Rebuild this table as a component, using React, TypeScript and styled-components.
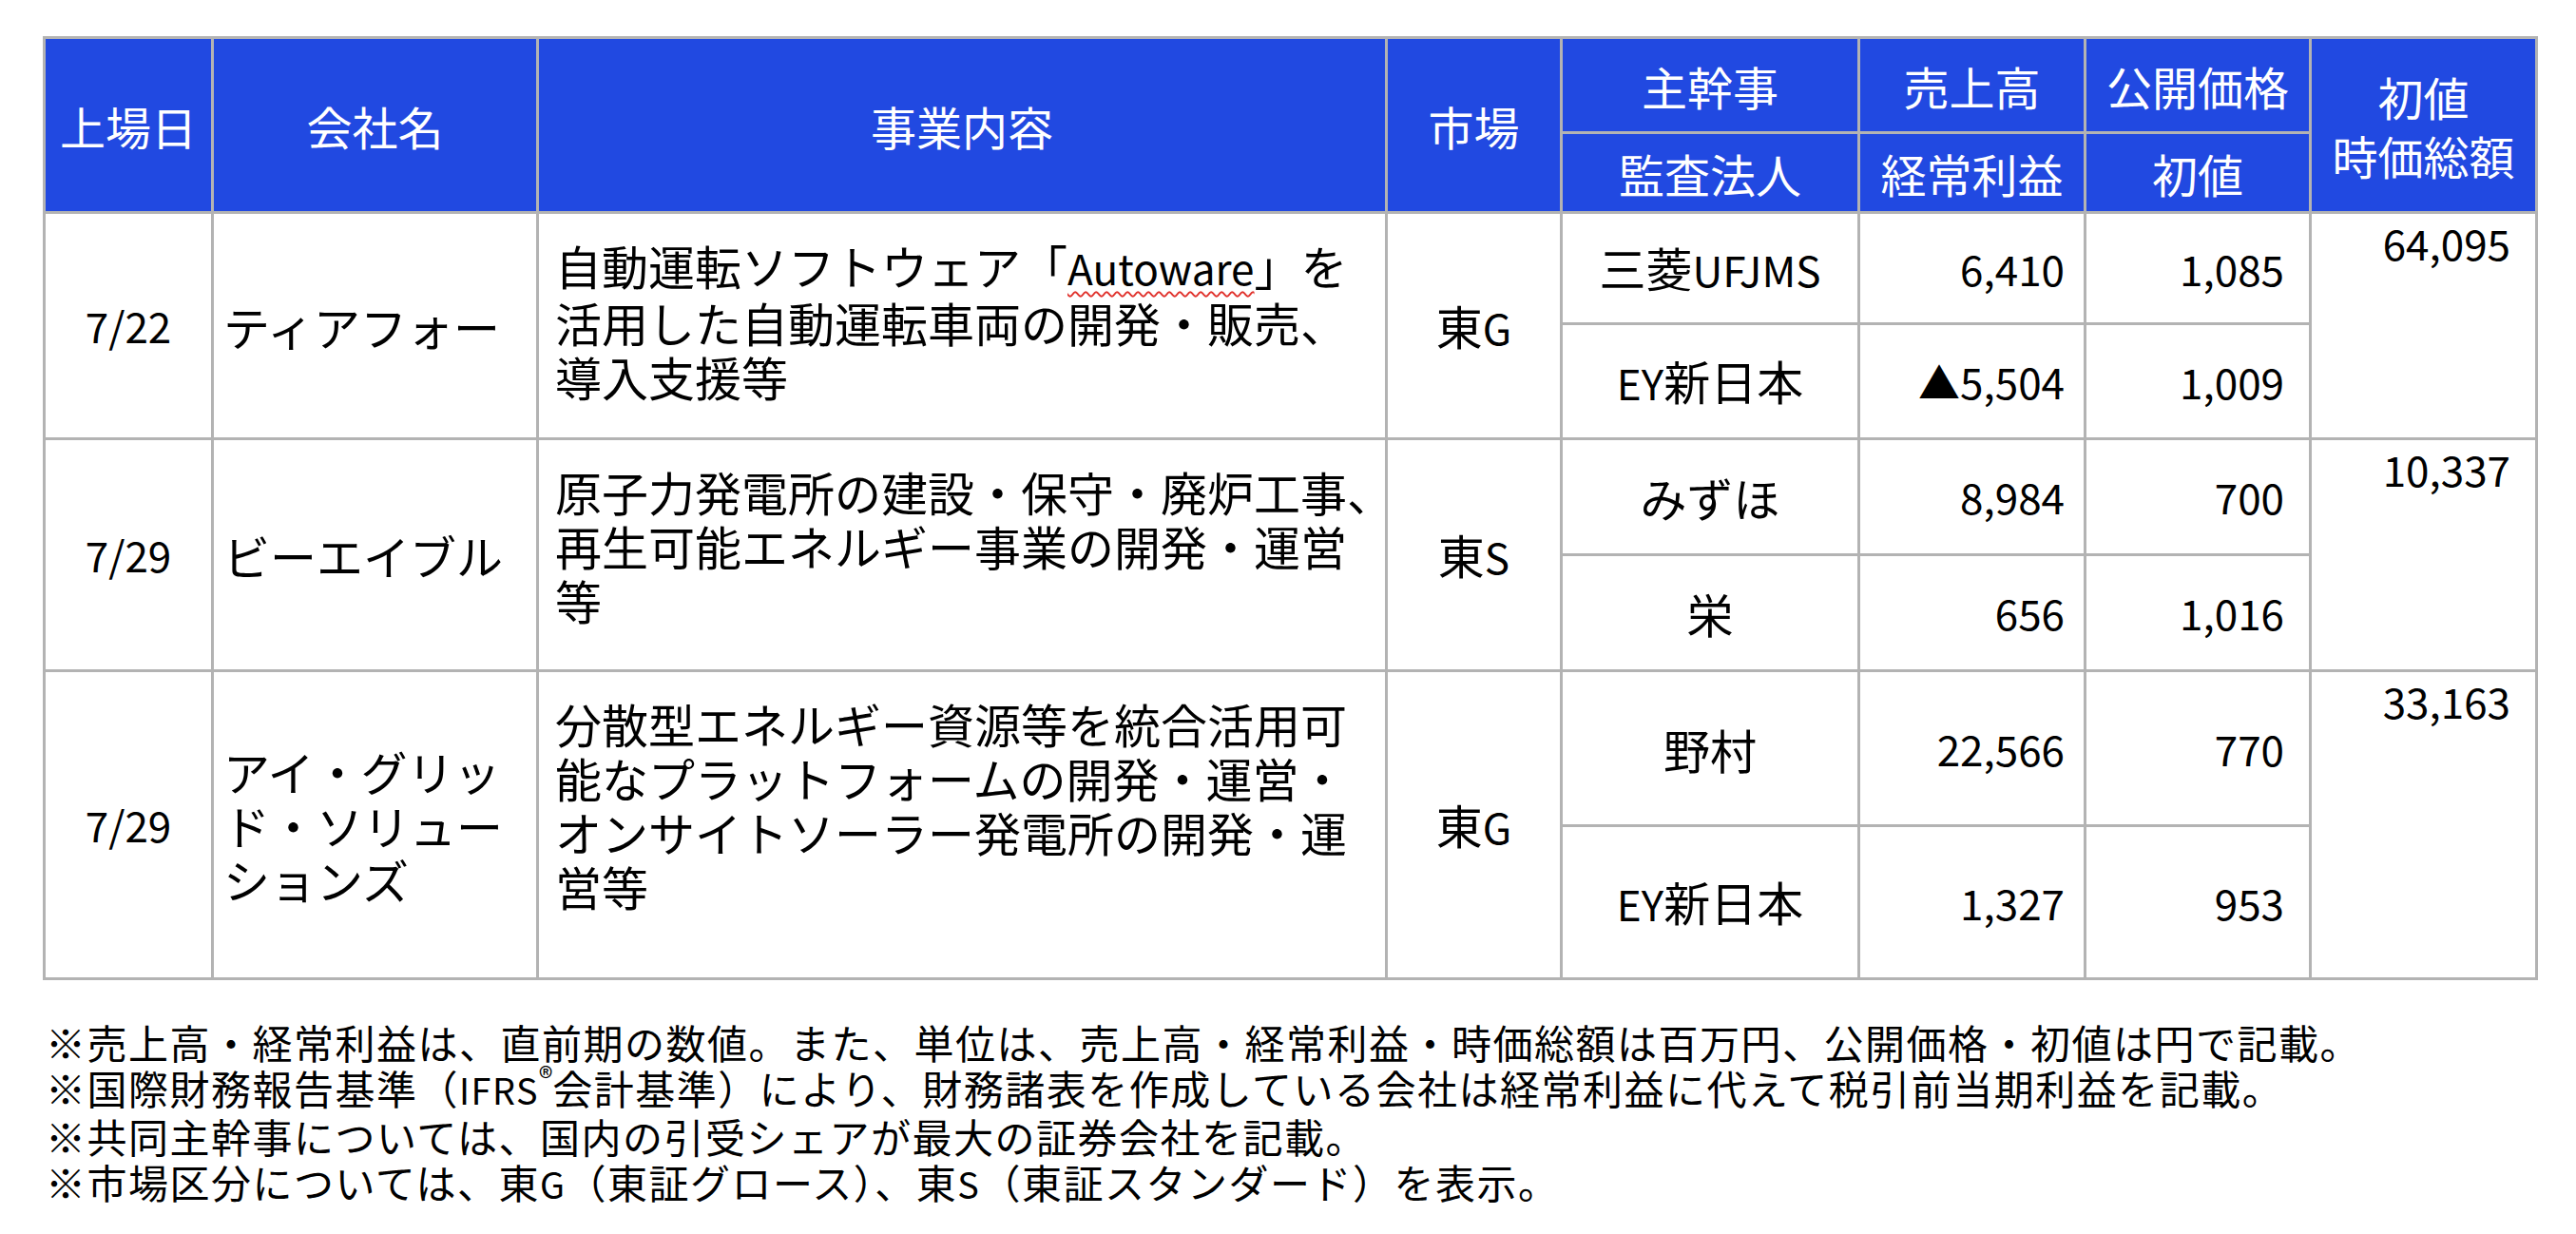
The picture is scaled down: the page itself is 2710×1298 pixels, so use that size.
import React, { ReactNode } from "react"
import styled, { createGlobalStyle } from "styled-components"

const GlobalStyle = createGlobalStyle`
    html, body {
        margin: 0;
        padding: 0;
        background: #ffffff;
    }
    body {
        font-family: "Noto Sans CJK JP", "Noto Sans", sans-serif;
        color: #000000;
    }
`

const Page = styled.div`
    width: 2710px;
    height: 1298px;
    box-sizing: border-box;
    padding: 38px 0 0 45px;
`

const Table = styled.div`
    display: grid;
    grid-template-columns: 174px 339px 890px 181px 310px 235px 234px 235px;
    grid-template-rows: 97px 81px 114px 118px 119px 119px 160px 158px;
    gap: 3px;
    padding: 3px;
    width: fit-content;
    background: #b3b3b3;
`

type Place = { $col: number; $row: number; $span?: number }

const Cell = styled.div<Place>`
    grid-column: ${(p) => p.$col};
    grid-row: ${(p) => `${p.$row} / span ${p.$span ?? 1}`};
    display: flex;
    flex-direction: column;
    justify-content: center;
    background: #ffffff;
    font-size: 49px;
    line-height: 57px;
    white-space: nowrap;
`

const HeadCell = styled(Cell)`
    background: #2149e1;
    color: #ffffff;
    align-items: center;
    text-align: center;
    font-size: 48px;
    line-height: 62px;
`

const CenterCell = styled(Cell)`
    align-items: center;
    text-align: center;
`

const DateCell = styled(CenterCell)`
    font-size: 44px;
`

const NameCell = styled(Cell)`
    padding-left: 10px;
`

const BizCell = styled(Cell)`
    justify-content: flex-start;
    padding: 25px 0 0 17px;
`

const NumCell = styled(Cell)<{ $pad: number }>`
    align-items: flex-end;
    padding-right: ${(p) => p.$pad}px;
    font-size: 44px;
`

const CapCell = styled(Cell)`
    justify-content: flex-start;
    align-items: flex-end;
    padding: 4px 26px 0 0;
    font-size: 44px;
    line-height: 1.2;
`

const Lat = styled.span`
    font-size: 0.9em;
`

const Spell = styled(Lat)`
    text-decoration: underline wavy #e0302a;
    text-decoration-thickness: 1.5px;
    text-underline-offset: 6px;
`

const Notes = styled.div`
    margin-top: 41px;
    padding-left: 3px;
    font-size: 42px;
    line-height: 48.4px;
    letter-spacing: 1.5px;
    white-space: nowrap;
`

const Note = styled.div``

const Sup = styled.sup`
    font-size: 0.72em;
    line-height: 0;
    vertical-align: 0.55em;
    letter-spacing: 0;
`

// latin runs get the smaller latin size, kept on one line
const mix = (s: string): ReactNode => (
    <span>
        {s.split(/([A-Za-z]+)/).map((part, i) =>
            /^[A-Za-z]+$/.test(part) ? <Lat key={i}>{part}</Lat> : part
        )}
    </span>
)

const lines = (items: ReactNode[]) =>
    items.map((item, i) => <div key={i}>{item}</div>)

type Listing = {
    date: string
    name: string[]
    biz: ReactNode[]
    market: string
    lead: string
    audit: string
    sales: string
    profit: string
    price: string
    first: string
    cap: string
}

const listings: Listing[] = [
    {
        date: "7/22",
        name: ["ティアフォー"],
        biz: [
            <>
                自動運転ソフトウェア「<Spell>Autoware</Spell>」を
            </>,
            "活用した自動運転車両の開発・販売、",
            "導入支援等",
        ],
        market: "東G",
        lead: "三菱UFJMS",
        audit: "EY新日本",
        sales: "6,410",
        profit: "▲5,504",
        price: "1,085",
        first: "1,009",
        cap: "64,095",
    },
    {
        date: "7/29",
        name: ["ビーエイブル"],
        biz: ["原子力発電所の建設・保守・廃炉工事、", "再生可能エネルギー事業の開発・運営", "等"],
        market: "東S",
        lead: "みずほ",
        audit: "栄",
        sales: "8,984",
        profit: "656",
        price: "700",
        first: "1,016",
        cap: "10,337",
    },
    {
        date: "7/29",
        name: ["アイ・グリッ", "ド・ソリュー", "ションズ"],
        biz: [
            "分散型エネルギー資源等を統合活用可",
            "能なプラットフォームの開発・運営・",
            "オンサイトソーラー発電所の開発・運",
            "営等",
        ],
        market: "東G",
        lead: "野村",
        audit: "EY新日本",
        sales: "22,566",
        profit: "1,327",
        price: "770",
        first: "953",
        cap: "33,163",
    },
]

const App = () => {
    return (
        <Page>
            <GlobalStyle />
            <Table>
                <HeadCell $col={1} $row={1} $span={2}>上場日</HeadCell>
                <HeadCell $col={2} $row={1} $span={2}>会社名</HeadCell>
                <HeadCell $col={3} $row={1} $span={2}>事業内容</HeadCell>
                <HeadCell $col={4} $row={1} $span={2}>市場</HeadCell>
                <HeadCell $col={5} $row={1}>主幹事</HeadCell>
                <HeadCell $col={5} $row={2}>監査法人</HeadCell>
                <HeadCell $col={6} $row={1}>売上高</HeadCell>
                <HeadCell $col={6} $row={2}>経常利益</HeadCell>
                <HeadCell $col={7} $row={1}>公開価格</HeadCell>
                <HeadCell $col={7} $row={2}>初値</HeadCell>
                <HeadCell $col={8} $row={1} $span={2}>
                    {lines(["初値", "時価総額"])}
                </HeadCell>

                {listings.map((item, i) => {
                    const row = 3 + i * 2
                    return (
                        <React.Fragment key={i}>
                            <DateCell $col={1} $row={row} $span={2}>{item.date}</DateCell>
                            <NameCell $col={2} $row={row} $span={2}>{lines(item.name)}</NameCell>
                            <BizCell $col={3} $row={row} $span={2}>{lines(item.biz)}</BizCell>
                            <CenterCell $col={4} $row={row} $span={2}>{mix(item.market)}</CenterCell>
                            <CenterCell $col={5} $row={row}>{mix(item.lead)}</CenterCell>
                            <CenterCell $col={5} $row={row + 1}>{mix(item.audit)}</CenterCell>
                            <NumCell $col={6} $row={row} $pad={20}>{item.sales}</NumCell>
                            <NumCell $col={6} $row={row + 1} $pad={20}>{item.profit}</NumCell>
                            <NumCell $col={7} $row={row} $pad={26}>{item.price}</NumCell>
                            <NumCell $col={7} $row={row + 1} $pad={26}>{item.first}</NumCell>
                            <CapCell $col={8} $row={row} $span={2}>{item.cap}</CapCell>
                        </React.Fragment>
                    )
                })}
            </Table>

            <Notes>
                <Note>※売上高・経常利益は、直前期の数値。また、単位は、売上高・経常利益・時価総額は百万円、公開価格・初値は円で記載。</Note>
                <Note>
                    ※国際財務報告基準（<Lat>IFRS</Lat>
                    <Sup>®</Sup>会計基準）により、財務諸表を作成している会社は経常利益に代えて税引前当期利益を記載。
                </Note>
                <Note>※共同主幹事については、国内の引受シェアが最大の証券会社を記載。</Note>
                <Note>
                    ※市場区分については、東<Lat>G</Lat>（東証グロース）、東<Lat>S</Lat>（東証スタンダード）を表示。
                </Note>
            </Notes>
        </Page>
    )
}

export default App
